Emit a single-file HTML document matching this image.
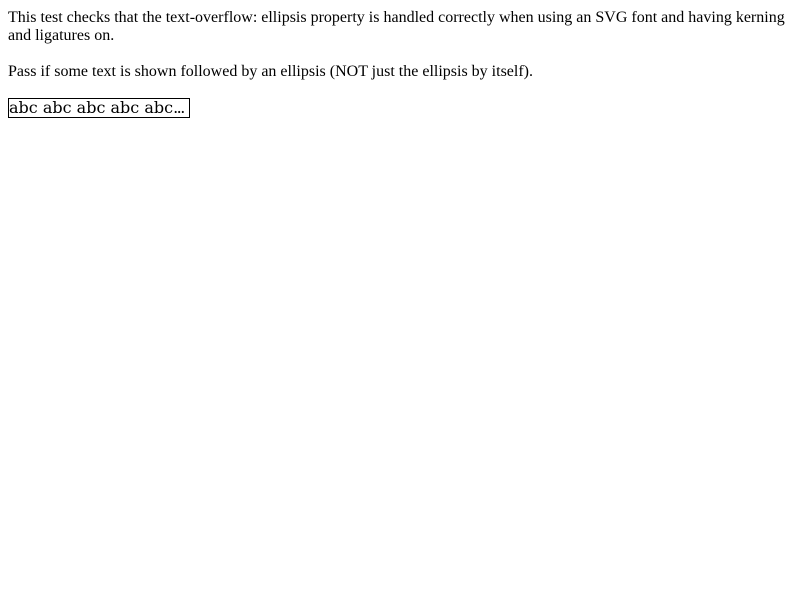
<!DOCTYPE html>
<html><head><style>
body{margin:8px;font-family:"Liberation Serif",serif;font-size:16px;line-height:18px;color:#000;background:#fff}
p{margin:0 0 18px 0;position:relative;top:1px}
.box{width:180px;border:1px solid #000;white-space:nowrap;overflow:hidden;font-family:"DejaVu Serif","Liberation Serif",serif;font-size:16px;line-height:18px}
</style></head><body>
<p>This test checks that the text-overflow: ellipsis property is handled correctly when using an SVG font and having kerning and ligatures on.</p>
<p>Pass if some text is shown followed by an ellipsis (NOT just the ellipsis by itself).</p>
<div class="box">abc abc abc abc abc<span style="letter-spacing:-1.5px">...</span></div>
</body></html>
